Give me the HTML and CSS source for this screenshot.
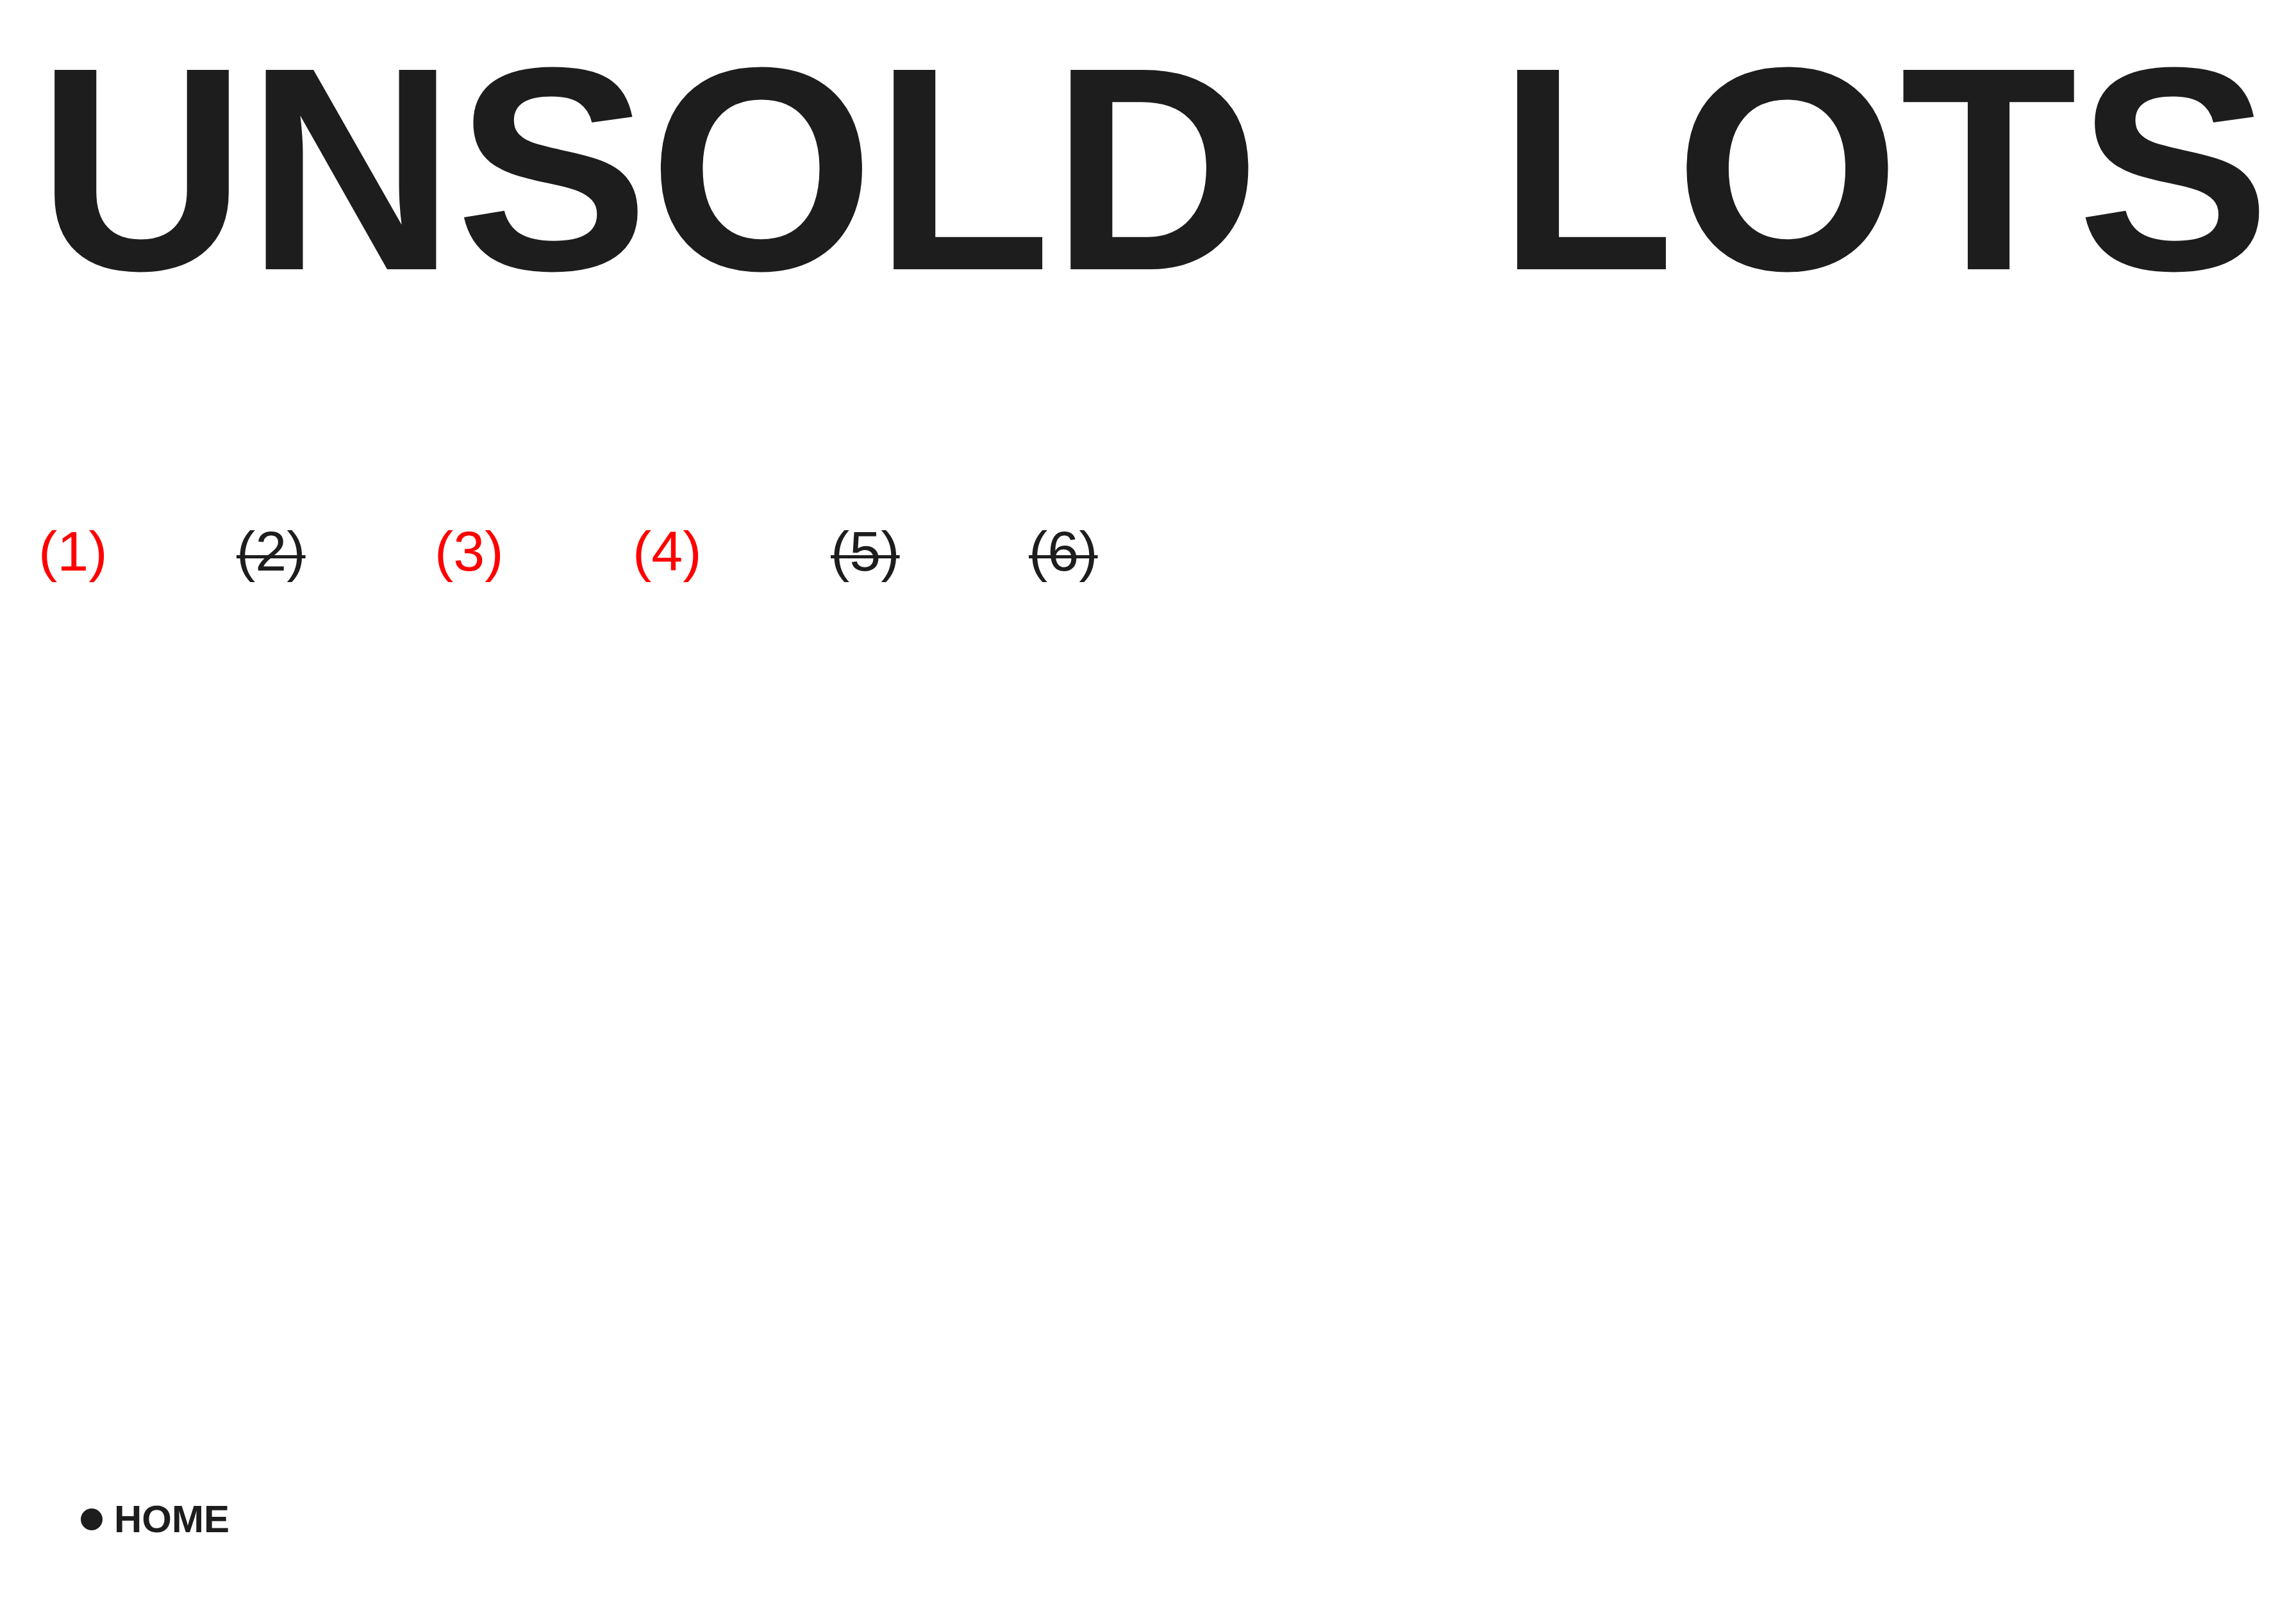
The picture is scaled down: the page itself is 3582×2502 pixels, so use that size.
FILE: index.html
```html
<!DOCTYPE html>
<html lang="en">
<head>
<meta charset="utf-8">
<meta name="viewport" content="width=device-width, initial-scale=1">
<title>Unsold Lots</title>
<link rel="stylesheet" href="styles.css">
</head>
<body>
<h1 class="title"><span>UNSOLD</span><span>LOTS</span></h1>
<main class="content">
<ol class="lots">
<li><a class="lot" href="#lot-1">(1)</a></li>
<li><a class="lot lot-sold" href="#lot-2">(2)</a></li>
<li><a class="lot" href="#lot-3">(3)</a></li>
<li><a class="lot" href="#lot-4">(4)</a></li>
<li><a class="lot lot-sold" href="#lot-5">(5)</a></li>
<li><a class="lot lot-sold" href="#lot-6">(6)</a></li>
</ol>
</main>
<footer class="footer"><a class="home" href="#"><span class="dot"></span>HOME</a></footer>
</body>
</html>
```

FILE: styles.css
```css
* { box-sizing: border-box; }
body {
  margin: 0;
  min-height: 100vh;
  display: flex;
  flex-direction: column;
  background: #fff;
  color: #1d1d1d;
  font-family: "Liberation Sans", Arial, sans-serif;
}
.title {
  display: flex;
  flex-wrap: wrap;
  justify-content: space-between;
  margin: 0;
  padding: 24px 40px 0 58px;
  font-size: 452px;
  line-height: 480px;
  font-weight: 700;
}
.content { flex: 1; padding: 306px 60px 0; }
.lots {
  display: grid;
  grid-template-columns: repeat(auto-fill, 309px);
  margin: 0;
  padding: 0;
  list-style: none;
  font-size: 88px;
  line-height: 100px;
}
.lot { color: #f00; text-decoration: none; }
/* A lowered strike: the underline is raised into the digits */
.lot-sold {
  color: #1d1d1d;
  text-decoration: underline 5px;
  text-underline-offset: -24px;
  text-decoration-skip-ink: none;
}
.footer { display: flex; padding: 0 126px 98px; }
.home {
  display: flex;
  align-items: center;
  gap: 18px;
  color: inherit;
  font-size: 60px;
  line-height: 68px;
  font-weight: 700;
  text-decoration: none;
}
.dot { width: 34px; height: 34px; border-radius: 50%; background: #1d1d1d; }
```
